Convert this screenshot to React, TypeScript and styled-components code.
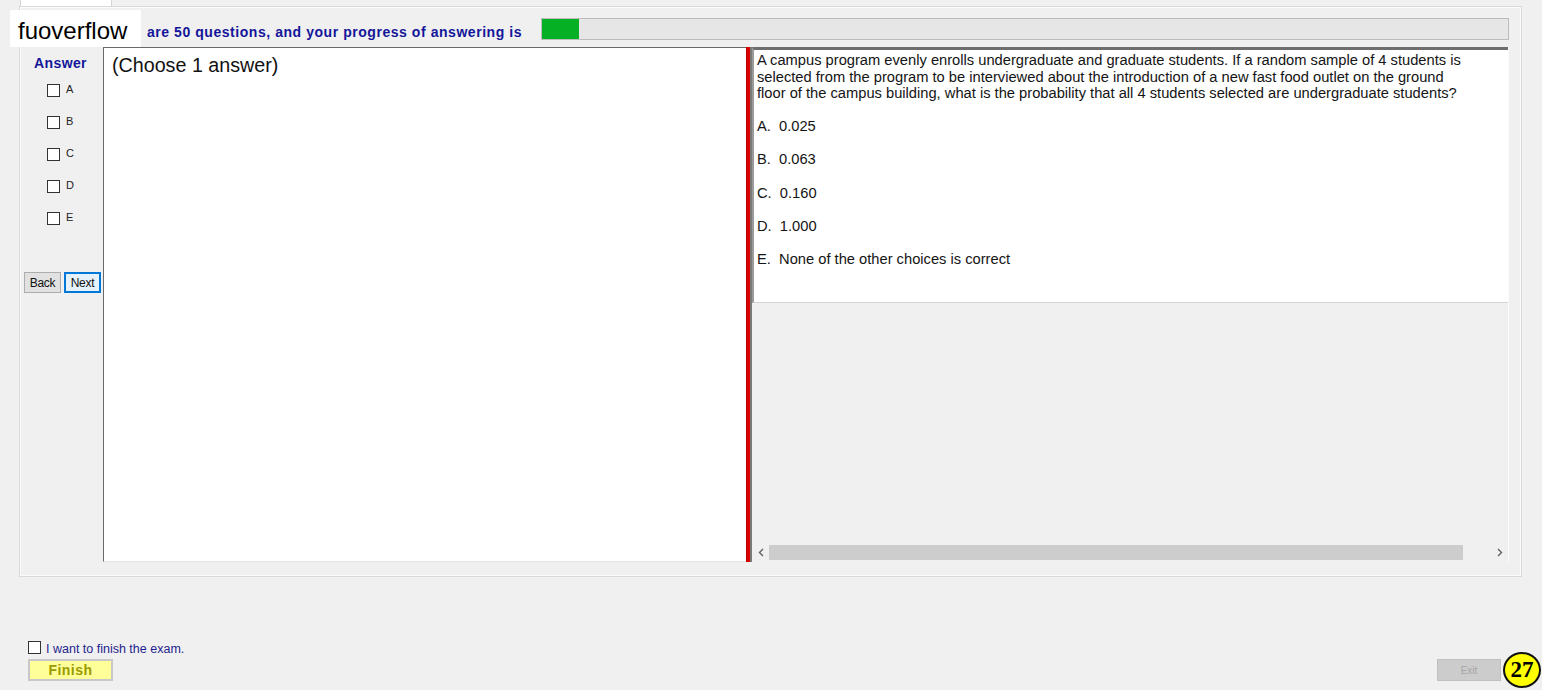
import styled, { createGlobalStyle } from "styled-components";

const GlobalStyle = createGlobalStyle`
  html, body {
    margin: 0;
    padding: 0;
    background: #f0f0f0;
    font-family: "Liberation Sans", Arial, sans-serif;
  }
`;

const CHOICES = ["A", "B", "C", "D", "E"];

const OPTIONS = [
  "A.  0.025",
  "B.  0.063",
  "C.  0.160",
  "D.  1.000",
  "E.  None of the other choices is correct",
];

const QUESTION =
  "A campus program evenly enrolls undergraduate and graduate students. If a random sample of 4 students is selected from the program to be interviewed about the introduction of a new fast food outlet on the ground floor of the campus building, what is the probability that all 4 students selected are undergraduate students?";

export default function App() {
  const progress = 37 / 968;

  return (
    <Page>
      <GlobalStyle />
      <TabRow>
        <Tab />
      </TabRow>

      <Panel>
        <HeaderRow>
          <HeaderText>are 50 questions, and your progress of answering is</HeaderText>
          <ProgressBar>
            <ProgressFill style={{ width: `${progress * 100}%` }} />
          </ProgressBar>
        </HeaderRow>

        <ContentRow>
          <AnswerColumn>
            <AnswerTitle>Answer</AnswerTitle>
            <ChoiceList>
              {CHOICES.map((c) => (
                <ChoiceRow key={c}>
                  <Box />
                  <ChoiceLabel>{c}</ChoiceLabel>
                </ChoiceRow>
              ))}
            </ChoiceList>
            <NavRow>
              <NavButton>Back</NavButton>
              <NavButton $focused>Next</NavButton>
            </NavRow>
          </AnswerColumn>

          <ChoicePane>(Choose 1 answer)</ChoicePane>

          <Splitter />

          <RightPane>
            <QuestionBox>
              <QuestionText>{QUESTION}</QuestionText>
              {OPTIONS.map((o) => (
                <Option key={o}>{o}</Option>
              ))}
            </QuestionBox>
            <Filler />
            <HScroll>
              <ScrollArrow>
                <svg width="6" height="9" viewBox="0 0 6 9">
                  <path d="M5 1 L1.5 4.5 L5 8" fill="none" stroke="#606060" strokeWidth="1.4" />
                </svg>
              </ScrollArrow>
              <ScrollThumb />
              <ScrollTrack />
              <ScrollArrow>
                <svg width="6" height="9" viewBox="0 0 6 9">
                  <path d="M1 1 L4.5 4.5 L1 8" fill="none" stroke="#606060" strokeWidth="1.4" />
                </svg>
              </ScrollArrow>
            </HScroll>
          </RightPane>
        </ContentRow>
      </Panel>

      <Footer>
        <CheckRow>
          <Box />
          <FinishNote>I want to finish the exam.</FinishNote>
        </CheckRow>
        <FinishRow>
          <FinishButton>Finish</FinishButton>
          <RightGroup>
            <ExitButton>Exit</ExitButton>
            <Badge>27</Badge>
          </RightGroup>
        </FinishRow>
      </Footer>

      <Watermark>fuoverflow</Watermark>
    </Page>
  );
}

const Page = styled.div`
  position: relative;
  width: 1542px;
  height: 690px;
  overflow: hidden;
  display: flex;
  flex-direction: column;
  background: #f0f0f0;
`;

const TabRow = styled.div`
  height: 6px;
  padding-left: 20px;
  display: flex;
`;

const Tab = styled.div`
  width: 90px;
  height: 6px;
  background: #ffffff;
  border: 1px solid #d6d6d6;
  border-top: none;
  border-bottom: none;
`;

const Panel = styled.div`
  margin-left: 19px;
  width: 1503px;
  height: 571px;
  box-sizing: border-box;
  border: 1px solid #d9d9d9;
  box-shadow: inset 0 0 0 1px #fbfbfb;
  background: #f0f0f0;
  padding: 10px 12px 0 4px;
  display: flex;
  flex-direction: column;
`;

const HeaderRow = styled.div`
  height: 23px;
  display: flex;
  align-items: center;
  margin-left: 123px;
`;

const HeaderText = styled.div`
  width: 394px;
  font-size: 14px;
  letter-spacing: 0.55px;
  font-weight: bold;
  color: #14169a;
  white-space: nowrap;
  padding-top: 7px;
`;

const ProgressBar = styled.div`
  flex: 1;
  height: 22px;
  box-sizing: border-box;
  background: #e6e6e6;
  border: 1px solid #bcbcbc;
  display: flex;
`;

const ProgressFill = styled.div`
  height: 100%;
  background: #06b025;
`;

const ContentRow = styled.div`
  margin-top: 7px;
  height: 515px;
  display: flex;
`;

const AnswerColumn = styled.div`
  width: 79px;
  display: flex;
  flex-direction: column;
  padding-top: 8px;
  box-sizing: border-box;
`;

const AnswerTitle = styled.div`
  padding-left: 10px;
  font-size: 14px;
  letter-spacing: 0.4px;
  line-height: 16px;
  font-weight: bold;
  color: #14169a;
`;

const ChoiceList = styled.div`
  margin-top: 3px;
  display: flex;
  flex-direction: column;
`;

const ChoiceRow = styled.div`
  height: 32px;
  display: flex;
  align-items: center;
  padding-left: 23px;
  gap: 6px;
`;

const Box = styled.span`
  display: inline-block;
  width: 13px;
  height: 13px;
  box-sizing: border-box;
  border: 1px solid #333333;
  background: #ffffff;
  flex-shrink: 0;
`;

const ChoiceLabel = styled.span`
  font-size: 11px;
  color: #222222;
  margin-top: -2px;
`;

const NavRow = styled.div`
  margin-top: 38px;
  display: flex;
  gap: 3px;
`;

const NavButton = styled.button<{ $focused?: boolean }>`
  width: 37px;
  height: 21px;
  padding: 0;
  box-sizing: border-box;
  font-family: "Liberation Sans", Arial, sans-serif;
  font-size: 12px;
  letter-spacing: -0.3px;
  color: #111111;
  background: ${(p) => (p.$focused ? "#e5f1fb" : "#e1e1e1")};
  border: ${(p) => (p.$focused ? "2px solid #0078d7" : "1px solid #adadad")};
`;

const ChoicePane = styled.div`
  width: 643px;
  background: #ffffff;
  border-left: 1px solid #6a6a6a;
  border-top: 1px solid #6a6a6a;
  border-bottom: 1px solid #e3e3e3;
  box-sizing: border-box;
  padding: 6px 0 0 8px;
  font-size: 19.7px;
  line-height: 23px;
  color: #111111;
`;

const Splitter = styled.div`
  width: 6px;
  box-sizing: border-box;
  background: #e10000;
  border-left: 1px solid #b40000;
  border-right: 2px solid #7a7a7a;
`;

const RightPane = styled.div`
  flex: 1;
  display: flex;
  flex-direction: column;
  border-right: 1px solid #fbfbfb;
`;

const QuestionBox = styled.div`
  height: 256px;
  box-sizing: border-box;
  background: #ffffff;
  border-top: 3px solid #6e6e6e;
  border-left: 2px solid #9a9a9a;
  border-bottom: 1px solid #d4d4d4;
  padding: 2px 36px 0 3px;
  font-size: 14.7px;
  line-height: 16.5px;
  color: #141414;
`;

const QuestionText = styled.div``;

const Option = styled.div`
  margin-top: 16.7px;
  white-space: pre;
`;

const Filler = styled.div`
  flex: 1;
  background: #f0f0f0;
`;

const HScroll = styled.div`
  height: 17px;
  margin-bottom: 1px;
  display: flex;
  background: #f0f0f0;
`;

const ScrollArrow = styled.div`
  width: 17px;
  display: flex;
  align-items: center;
  justify-content: center;
`;

const ScrollThumb = styled.div`
  width: 694px;
  margin: 1px 0;
  background: #cdcdcd;
`;

const ScrollTrack = styled.div`
  flex: 1;
`;

const Footer = styled.div`
  margin-top: 64px;
  padding: 0 1px 0 28px;
  display: flex;
  flex-direction: column;
`;

const CheckRow = styled.div`
  height: 13px;
  display: flex;
  align-items: center;
  gap: 5px;
`;

const FinishNote = styled.span`
  font-size: 12.5px;
  color: #1f1f8f;
  padding-top: 2px;
`;

const FinishRow = styled.div`
  margin-top: 5px;
  height: 22px;
  display: flex;
  align-items: center;
  justify-content: space-between;
`;

const FinishButton = styled.button`
  width: 85px;
  height: 22px;
  padding: 0;
  box-sizing: border-box;
  background: #ffff99;
  border: 2px solid #c8c8c8;
  font-family: "Liberation Sans", Arial, sans-serif;
  font-size: 14px;
  letter-spacing: 0.5px;
  font-weight: bold;
  color: #9a9a00;
`;

const RightGroup = styled.div`
  display: flex;
  align-items: center;
  gap: 2px;
`;

const ExitButton = styled.button`
  width: 64px;
  height: 22px;
  padding: 0;
  box-sizing: border-box;
  background: #cccccc;
  border: 1px solid #c0c0c0;
  font-family: "Liberation Sans", Arial, sans-serif;
  font-size: 10px;
  color: #a5a5a5;
`;

const Badge = styled.div`
  width: 38px;
  height: 36px;
  margin: -7px 0;
  box-sizing: border-box;
  border-radius: 50%;
  border: 2px solid #111111;
  background: #ffff00;
  display: flex;
  align-items: center;
  justify-content: center;
  font-family: "Liberation Serif", "Times New Roman", serif;
  font-size: 23px;
  font-weight: bold;
  color: #000000;
`;

const Watermark = styled.div`
  position: absolute;
  left: 10px;
  top: 10px;
  width: 131px;
  height: 37px;
  background: #ffffff;
  box-sizing: border-box;
  padding: 5px 0 0 8px;
  display: flex;
  align-items: center;
  font-size: 24px;
  color: #000000;
`;
